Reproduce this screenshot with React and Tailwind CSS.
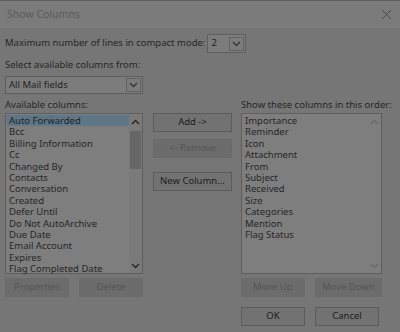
const available = [
  'Auto Forwarded',
  'Bcc',
  'Billing Information',
  'Cc',
  'Changed By',
  'Contacts',
  'Conversation',
  'Created',
  'Defer Until',
  'Do Not AutoArchive',
  'Due Date',
  'Email Account',
  'Expires',
  'Flag Completed Date',
];

const shown = [
  'Importance',
  'Reminder',
  'Icon',
  'Attachment',
  'From',
  'Subject',
  'Received',
  'Size',
  'Categories',
  'Mention',
  'Flag Status',
];

function Chevron({ up, className }) {
  return (
    <svg width="9" height="6" viewBox="0 0 9 6" className={className}>
      <path
        d={up ? 'M1 5 L4.5 1.5 L8 5' : 'M1 1 L4.5 4.5 L8 1'}
        fill="none"
        stroke="currentColor"
        strokeWidth="1.3"
      />
    </svg>
  );
}

function Button({ children, disabled, className = '' }) {
  return (
    <div
      className={`flex h-[19px] items-center justify-center border text-[9.5px] ${
        disabled
          ? 'border-[#6a6a6a] bg-[#6c6c6c] text-[#555]'
          : 'border-[#5b5b5b] bg-[#727272] text-[#1c1c1c]'
      } ${className}`}
    >
      {children}
    </div>
  );
}

function Select({ value, className = '' }) {
  return (
    <div className={`flex h-[18px] items-center border border-[#5e5e5e] bg-[#7c7c7c] ${className}`}>
      <span className="flex-1 pl-[3px] text-[9.5px] text-[#222]">{value}</span>
      <div className="mr-[1px] flex h-[14px] w-[15px] items-center justify-center border border-[#626262] text-[#333]">
        <Chevron />
      </div>
    </div>
  );
}

export default function App() {
  return (
    <div
      className="flex h-[332px] w-[400px] flex-col overflow-hidden border-t border-[#5c5c5c] bg-[#767676] text-[#262626]"
      style={{ fontFamily: '"Noto Sans", "Open Sans", sans-serif' }}
    >
      <div className="flex h-[27px] items-center justify-between bg-[#7b7b7b] pl-[7px] pr-[8px]">
        <span className="text-[10.5px] text-[#5a5a5a]">Show Columns</span>
        <svg width="11" height="11" viewBox="0 0 11 11" className="text-[#4a4a4a]">
          <path d="M1 1 L10 10 M10 1 L1 10" stroke="currentColor" strokeWidth="1" />
        </svg>
      </div>

      <div className="flex flex-1 flex-col px-[5px]">
        <div className="mt-[6px] flex items-center gap-[2px] text-[9.5px]">
          <span>Maximum number of lines in compact mode:</span>
          <Select value="2" className="h-[19px] w-[39px]" />
        </div>

        <div className="mt-[5px] text-[9.5px] leading-[14px]">Select available columns from:</div>
        <Select value="All Mail fields" className="mt-[4px] w-[138px]" />

        <div className="mt-[3px] flex">
          <div className="flex w-[138px] flex-col">
            <div className="text-[9.5px] leading-[15px]">Available columns:</div>
            <div className="mt-[1px] flex h-[161px] border border-[#5e5e5e] bg-[#7e7e7e]">
              <div className="flex-1 pl-[1px] pt-[1px]">
                {available.map((item, i) => (
                  <div
                    key={item}
                    className={`h-[11.4px] pl-[2px] text-[9.5px] leading-[11.4px] ${
                      i === 0 ? 'bg-[#5f7686] text-[#1e2226]' : ''
                    }`}
                  >
                    {item}
                  </div>
                ))}
              </div>
              <div className="flex w-[13px] flex-col items-center bg-[#7a7a7a] text-[#222]">
                <Chevron up className="mt-[5px]" />
                <div className="mt-[6px] h-[38px] w-[11px] bg-[#676767]" />
                <div className="flex-1" />
                <Chevron className="mb-[4px]" />
              </div>
            </div>
            <div className="mt-[4px] flex gap-[10px]">
              <Button disabled className="w-[64px]">Properties</Button>
              <Button disabled className="w-[64px]">Delete</Button>
            </div>
          </div>

          <div className="ml-[10px] flex w-[79px] flex-col gap-[7px] pt-[16px]">
            <Button>Add -&gt;</Button>
            <Button disabled>&lt;- Remove</Button>
            <Button className="mt-[7px]">New Column...</Button>
          </div>

          <div className="ml-[9px] flex w-[141px] flex-col">
            <div className="whitespace-nowrap text-[9.5px] leading-[15px]">
              Show these columns in this order:
            </div>
            <div className="mt-[1px] flex h-[161px] border border-[#5e5e5e] bg-[#7e7e7e]">
              <div className="flex-1 pl-[3px] pt-[1px]">
                {shown.map((item) => (
                  <div key={item} className="h-[11.4px] text-[9.5px] leading-[11.4px]">
                    {item}
                  </div>
                ))}
              </div>
              <div className="flex w-[13px] flex-col items-center text-[#6a6a6a]">
                <Chevron up className="mt-[5px]" />
                <div className="flex-1" />
                <Chevron className="mb-[4px]" />
              </div>
            </div>
            <div className="mt-[4px] flex gap-[10px]">
              <Button disabled className="w-[64px]">Move Up</Button>
              <Button disabled className="w-[68px]">Move Down</Button>
            </div>
            <div className="mt-[10px] flex gap-[10px]">
              <Button className="w-[64px]">OK</Button>
              <Button className="w-[64px]">Cancel</Button>
            </div>
          </div>
        </div>
      </div>
    </div>
  );
}
